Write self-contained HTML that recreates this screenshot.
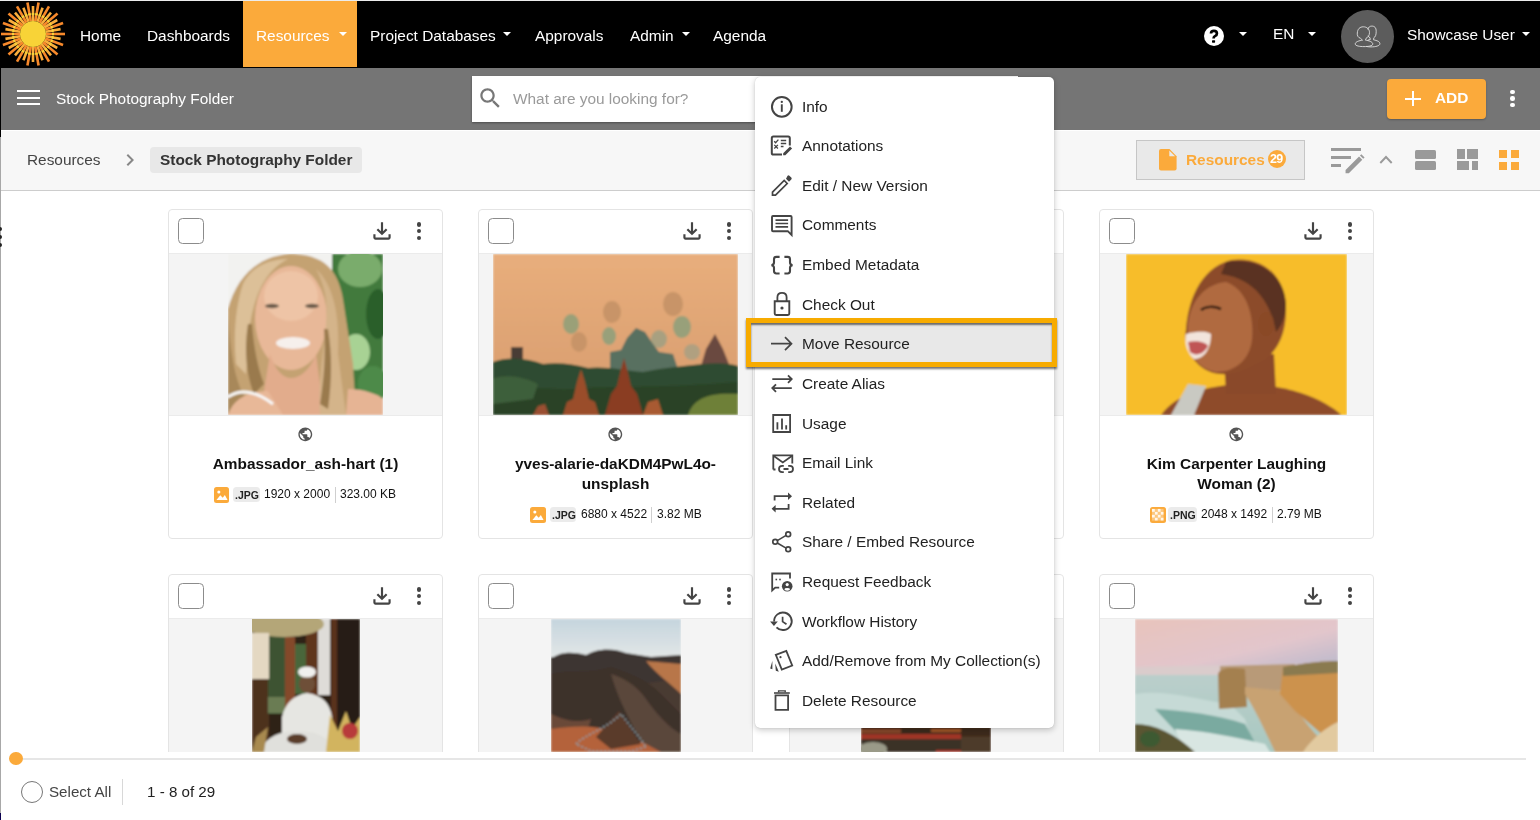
<!DOCTYPE html><html><head><meta charset="utf-8"><style>*{box-sizing:border-box;margin:0;padding:0}
html,body{width:1540px;height:820px;overflow:hidden;background:#fff;font-family:"Liberation Sans",sans-serif;color:#222}
.abs{position:absolute}
.t{position:absolute;white-space:nowrap}
.t{will-change:transform}
</style></head><body>
<div class="abs" style="left:0;top:0;width:1540px;height:1px;background:#ececec"></div>
<div class="abs" style="left:0;top:1px;width:1540px;height:67px;background:#000"></div>
<div class="abs" style="left:243px;top:1px;width:114px;height:66px;background:#fbaa3b"></div>
<svg class="abs" style="left:0px;top:0px;" width="70" height="70" viewBox="0 0 70 70"><line x1="46.00" y1="34.00" x2="65.00" y2="34.00" stroke="#f7892b" stroke-width="2.6"/><line x1="52.00" y1="34.00" x2="54.00" y2="34.00" stroke="#f7d43a" stroke-width="2.6"/><line x1="45.80" y1="36.26" x2="60.57" y2="38.86" stroke="#f9ad3c" stroke-width="2.6"/><line x1="51.71" y1="37.30" x2="53.68" y2="37.65" stroke="#f7d43a" stroke-width="2.6"/><line x1="45.22" y1="38.45" x2="63.07" y2="44.94" stroke="#f7892b" stroke-width="2.6"/><line x1="50.85" y1="40.50" x2="52.73" y2="41.18" stroke="#f7d43a" stroke-width="2.6"/><line x1="44.26" y1="40.50" x2="57.25" y2="48.00" stroke="#f9ad3c" stroke-width="2.6"/><line x1="49.45" y1="43.50" x2="51.19" y2="44.50" stroke="#f7d43a" stroke-width="2.6"/><line x1="42.96" y1="42.36" x2="57.51" y2="54.57" stroke="#f7892b" stroke-width="2.6"/><line x1="47.55" y1="46.21" x2="49.09" y2="47.50" stroke="#f7d43a" stroke-width="2.6"/><line x1="41.36" y1="43.96" x2="51.00" y2="55.45" stroke="#f9ad3c" stroke-width="2.6"/><line x1="45.21" y1="48.55" x2="46.50" y2="50.09" stroke="#f7d43a" stroke-width="2.6"/><line x1="39.50" y1="45.26" x2="49.00" y2="61.71" stroke="#f7892b" stroke-width="2.6"/><line x1="42.50" y1="50.45" x2="43.50" y2="52.19" stroke="#f7d43a" stroke-width="2.6"/><line x1="37.45" y1="46.22" x2="42.58" y2="60.31" stroke="#f9ad3c" stroke-width="2.6"/><line x1="39.50" y1="51.85" x2="40.18" y2="53.73" stroke="#f7d43a" stroke-width="2.6"/><line x1="35.26" y1="46.80" x2="38.56" y2="65.51" stroke="#f7892b" stroke-width="2.6"/><line x1="36.30" y1="52.71" x2="36.65" y2="54.68" stroke="#f7d43a" stroke-width="2.6"/><line x1="33.00" y1="47.00" x2="33.00" y2="62.00" stroke="#f9ad3c" stroke-width="2.6"/><line x1="33.00" y1="53.00" x2="33.00" y2="55.00" stroke="#f7d43a" stroke-width="2.6"/><line x1="30.74" y1="46.80" x2="27.44" y2="65.51" stroke="#f7892b" stroke-width="2.6"/><line x1="29.70" y1="52.71" x2="29.35" y2="54.68" stroke="#f7d43a" stroke-width="2.6"/><line x1="28.55" y1="46.22" x2="23.42" y2="60.31" stroke="#f9ad3c" stroke-width="2.6"/><line x1="26.50" y1="51.85" x2="25.82" y2="53.73" stroke="#f7d43a" stroke-width="2.6"/><line x1="26.50" y1="45.26" x2="17.00" y2="61.71" stroke="#f7892b" stroke-width="2.6"/><line x1="23.50" y1="50.45" x2="22.50" y2="52.19" stroke="#f7d43a" stroke-width="2.6"/><line x1="24.64" y1="43.96" x2="15.00" y2="55.45" stroke="#f9ad3c" stroke-width="2.6"/><line x1="20.79" y1="48.55" x2="19.50" y2="50.09" stroke="#f7d43a" stroke-width="2.6"/><line x1="23.04" y1="42.36" x2="8.49" y2="54.57" stroke="#f7892b" stroke-width="2.6"/><line x1="18.45" y1="46.21" x2="16.91" y2="47.50" stroke="#f7d43a" stroke-width="2.6"/><line x1="21.74" y1="40.50" x2="8.75" y2="48.00" stroke="#f9ad3c" stroke-width="2.6"/><line x1="16.55" y1="43.50" x2="14.81" y2="44.50" stroke="#f7d43a" stroke-width="2.6"/><line x1="20.78" y1="38.45" x2="2.93" y2="44.94" stroke="#f7892b" stroke-width="2.6"/><line x1="15.15" y1="40.50" x2="13.27" y2="41.18" stroke="#f7d43a" stroke-width="2.6"/><line x1="20.20" y1="36.26" x2="5.43" y2="38.86" stroke="#f9ad3c" stroke-width="2.6"/><line x1="14.29" y1="37.30" x2="12.32" y2="37.65" stroke="#f7d43a" stroke-width="2.6"/><line x1="20.00" y1="34.00" x2="1.00" y2="34.00" stroke="#f7892b" stroke-width="2.6"/><line x1="14.00" y1="34.00" x2="12.00" y2="34.00" stroke="#f7d43a" stroke-width="2.6"/><line x1="20.20" y1="31.74" x2="5.43" y2="29.14" stroke="#f9ad3c" stroke-width="2.6"/><line x1="14.29" y1="30.70" x2="12.32" y2="30.35" stroke="#f7d43a" stroke-width="2.6"/><line x1="20.78" y1="29.55" x2="2.93" y2="23.06" stroke="#f7892b" stroke-width="2.6"/><line x1="15.15" y1="27.50" x2="13.27" y2="26.82" stroke="#f7d43a" stroke-width="2.6"/><line x1="21.74" y1="27.50" x2="8.75" y2="20.00" stroke="#f9ad3c" stroke-width="2.6"/><line x1="16.55" y1="24.50" x2="14.81" y2="23.50" stroke="#f7d43a" stroke-width="2.6"/><line x1="23.04" y1="25.64" x2="8.49" y2="13.43" stroke="#f7892b" stroke-width="2.6"/><line x1="18.45" y1="21.79" x2="16.91" y2="20.50" stroke="#f7d43a" stroke-width="2.6"/><line x1="24.64" y1="24.04" x2="15.00" y2="12.55" stroke="#f9ad3c" stroke-width="2.6"/><line x1="20.79" y1="19.45" x2="19.50" y2="17.91" stroke="#f7d43a" stroke-width="2.6"/><line x1="26.50" y1="22.74" x2="17.00" y2="6.29" stroke="#f7892b" stroke-width="2.6"/><line x1="23.50" y1="17.55" x2="22.50" y2="15.81" stroke="#f7d43a" stroke-width="2.6"/><line x1="28.55" y1="21.78" x2="23.42" y2="7.69" stroke="#f9ad3c" stroke-width="2.6"/><line x1="26.50" y1="16.15" x2="25.82" y2="14.27" stroke="#f7d43a" stroke-width="2.6"/><line x1="30.74" y1="21.20" x2="27.44" y2="2.49" stroke="#f7892b" stroke-width="2.6"/><line x1="29.70" y1="15.29" x2="29.35" y2="13.32" stroke="#f7d43a" stroke-width="2.6"/><line x1="33.00" y1="21.00" x2="33.00" y2="6.00" stroke="#f9ad3c" stroke-width="2.6"/><line x1="33.00" y1="15.00" x2="33.00" y2="13.00" stroke="#f7d43a" stroke-width="2.6"/><line x1="35.26" y1="21.20" x2="38.56" y2="2.49" stroke="#f7892b" stroke-width="2.6"/><line x1="36.30" y1="15.29" x2="36.65" y2="13.32" stroke="#f7d43a" stroke-width="2.6"/><line x1="37.45" y1="21.78" x2="42.58" y2="7.69" stroke="#f9ad3c" stroke-width="2.6"/><line x1="39.50" y1="16.15" x2="40.18" y2="14.27" stroke="#f7d43a" stroke-width="2.6"/><line x1="39.50" y1="22.74" x2="49.00" y2="6.29" stroke="#f7892b" stroke-width="2.6"/><line x1="42.50" y1="17.55" x2="43.50" y2="15.81" stroke="#f7d43a" stroke-width="2.6"/><line x1="41.36" y1="24.04" x2="51.00" y2="12.55" stroke="#f9ad3c" stroke-width="2.6"/><line x1="45.21" y1="19.45" x2="46.50" y2="17.91" stroke="#f7d43a" stroke-width="2.6"/><line x1="42.96" y1="25.64" x2="57.51" y2="13.43" stroke="#f7892b" stroke-width="2.6"/><line x1="47.55" y1="21.79" x2="49.09" y2="20.50" stroke="#f7d43a" stroke-width="2.6"/><line x1="44.26" y1="27.50" x2="57.25" y2="20.00" stroke="#f9ad3c" stroke-width="2.6"/><line x1="49.45" y1="24.50" x2="51.19" y2="23.50" stroke="#f7d43a" stroke-width="2.6"/><line x1="45.22" y1="29.55" x2="63.07" y2="23.06" stroke="#f7892b" stroke-width="2.6"/><line x1="50.85" y1="27.50" x2="52.73" y2="26.82" stroke="#f7d43a" stroke-width="2.6"/><line x1="45.80" y1="31.74" x2="60.57" y2="29.14" stroke="#f9ad3c" stroke-width="2.6"/><line x1="51.71" y1="30.70" x2="53.68" y2="30.35" stroke="#f7d43a" stroke-width="2.6"/><circle cx="33" cy="34" r="13" fill="#f8d337"/></svg>
<div class="t" style="left:79.50px;top:27.86px;font-size:15.4px;line-height:15.4px;color:#fff;font-weight:normal;">Home</div>
<div class="t" style="left:146.50px;top:27.86px;font-size:15.4px;line-height:15.4px;color:#fff;font-weight:normal;">Dashboards</div>
<div class="t" style="left:256.00px;top:27.86px;font-size:15.4px;line-height:15.4px;color:#fff;font-weight:normal;">Resources</div>
<div class="abs" style="left:338.5px;top:32px;width:0;height:0;border-left:4px solid transparent;border-right:4px solid transparent;border-top:4.5px solid #fff"></div>
<div class="t" style="left:369.50px;top:27.86px;font-size:15.4px;line-height:15.4px;color:#fff;font-weight:normal;">Project Databases</div>
<div class="abs" style="left:502.5px;top:32px;width:0;height:0;border-left:4px solid transparent;border-right:4px solid transparent;border-top:4.5px solid #fff"></div>
<div class="t" style="left:534.50px;top:27.86px;font-size:15.4px;line-height:15.4px;color:#fff;font-weight:normal;">Approvals</div>
<div class="t" style="left:629.50px;top:27.86px;font-size:15.4px;line-height:15.4px;color:#fff;font-weight:normal;">Admin</div>
<div class="abs" style="left:681.5px;top:32px;width:0;height:0;border-left:4px solid transparent;border-right:4px solid transparent;border-top:4.5px solid #fff"></div>
<div class="t" style="left:712.50px;top:27.86px;font-size:15.4px;line-height:15.4px;color:#fff;font-weight:normal;">Agenda</div>
<div class="abs" style="left:1203.6px;top:26.1px;width:20.2px;height:20.2px;border-radius:50%;background:#fff"></div>
<svg class="abs" style="left:1200px;top:22px;" width="28" height="28" viewBox="0 0 28 28"><path d="M11 11.6Q11 8.9 13.9 8.9Q16.9 8.9 16.9 11.5Q16.9 13 15.3 13.9Q13.6 14.8 13.6 16.2V16.6" fill="none" stroke="#000" stroke-width="2.7" stroke-linecap="butt"/><rect x="12" y="18.2" width="3.1" height="2.5" rx="0.6" fill="#000"/></svg>
<div class="abs" style="left:1239px;top:31.6px;width:0;height:0;border-left:4px solid transparent;border-right:4px solid transparent;border-top:4.5px solid #fff"></div>
<div class="t" style="left:1273.00px;top:25.76px;font-size:15.4px;line-height:15.4px;color:#fff;font-weight:normal;">EN</div>
<div class="abs" style="left:1308px;top:31.6px;width:0;height:0;border-left:4px solid transparent;border-right:4px solid transparent;border-top:4.5px solid #fff"></div>
<div class="abs" style="left:1340.7px;top:9.5px;width:53.5px;height:53.5px;border-radius:50%;background:#5c5c5c"></div>
<svg class="abs" style="left:1340px;top:9px;" width="55" height="55" viewBox="0 0 55 55"><path d="M20.5 29.3C18 28.5 17 26.5 17.3 24C17.6 20 19.8 17.8 23.3 17.8C26.8 17.8 29.5 20 29.5 23.6C29.5 26.3 28 28.5 26 29.3L25.5 31.2C28.5 31.5 32.8 32.8 32.8 35C32.8 37 28 37.6 24 37.6C20 37.6 15.2 37 15.2 35C15.2 32.8 19.5 31.5 22.5 31.2z" fill="none" stroke="#e6e6e6" stroke-width="0.85"/><path d="M27.8 20.5C28.3 18.2 29.8 17.1 31.8 17.1C34.5 17.1 36.2 18.5 36.2 22.5C36.2 26 35.3 28 33.8 28.8L33.6 30.9C36.8 31.4 39.9 32.6 39.9 34.7C39.9 36.9 35.5 37.9 31 37.9C29 37.9 27.5 37.7 26.5 37.4M27.6 31.3C28.5 30.8 29.5 30.5 30.3 30.6L30 28.7C28.8 28.2 28.2 27.5 27.8 26.8" fill="none" stroke="#e6e6e6" stroke-width="0.85"/></svg>
<div class="t" style="left:1406.50px;top:27.46px;font-size:15.4px;line-height:15.4px;color:#fff;font-weight:normal;">Showcase User</div>
<div class="abs" style="left:1522px;top:32px;width:0;height:0;border-left:4px solid transparent;border-right:4px solid transparent;border-top:4.5px solid #fff"></div>
<div class="abs" style="left:1px;top:68px;width:1539px;height:62px;background:#757575"></div>
<div class="abs" style="left:17px;top:90.1px;width:23.2px;height:2.4px;background:#fff"></div>
<div class="abs" style="left:17px;top:96.7px;width:23.2px;height:2.4px;background:#fff"></div>
<div class="abs" style="left:17px;top:102.9px;width:23.2px;height:2.4px;background:#fff"></div>
<div class="t" style="left:55.80px;top:91.16px;font-size:15.4px;line-height:15.4px;color:#fff;font-weight:normal;">Stock Photography Folder</div>
<div class="abs" style="left:472px;top:76px;width:546px;height:46px;background:#fff;box-shadow:0 1px 2px rgba(0,0,0,.35)"></div>
<svg class="abs" style="left:477px;top:85px;" width="26.6" height="26.6" viewBox="0 0 24 24"><path fill="#777" d="M15.5 14h-.79l-.28-.27C15.41 12.59 16 11.11 16 9.5 16 5.91 13.09 3 9.5 3S3 5.91 3 9.5 5.91 16 9.5 16c1.61 0 3.09-.59 4.23-1.57l.27.28v.79l5 4.99L20.49 19l-4.99-5zm-6 0C7.010 14 5 11.99 5 9.5S7.01 5 9.5 5 14 7.01 14 9.5 11.99 14 9.5 14z"/></svg>
<div class="t" style="left:512.50px;top:90.76px;font-size:15.4px;line-height:15.4px;color:#9a9a9a;font-weight:normal;">What are you looking for?</div>
<div class="abs" style="left:1387px;top:79px;width:99px;height:40px;background:#fbaa3b;border-radius:4px;box-shadow:0 1px 2px rgba(0,0,0,.25)"></div>
<div class="abs" style="left:1405px;top:97.6px;width:15.5px;height:2.2px;background:#fff"></div>
<div class="abs" style="left:1411.65px;top:90.8px;width:2.2px;height:15.5px;background:#fff"></div>
<div class="t" style="left:1434.50px;top:90.16px;font-size:15.4px;line-height:15.4px;color:#fff;font-weight:bold;">ADD</div>
<div class="abs" style="left:1510.2px;top:89.6px;width:4.4px;height:4.4px;border-radius:50%;background:#fff"></div>
<div class="abs" style="left:1510.2px;top:96.3px;width:4.4px;height:4.4px;border-radius:50%;background:#fff"></div>
<div class="abs" style="left:1510.2px;top:103.1px;width:4.4px;height:4.4px;border-radius:50%;background:#fff"></div>
<div class="abs" style="left:1px;top:130px;width:1539px;height:61px;background:#f7f7f7;border-top:1px solid #fff;border-bottom:1px solid #cdcdcd"></div>
<div class="abs" style="left:0;top:1px;width:1px;height:136px;background:#000"></div>
<div class="abs" style="left:0;top:137px;width:1px;height:683px;background:#a8a8a8"></div>
<div class="t" style="left:27.00px;top:151.56px;font-size:15.4px;line-height:15.4px;color:#444;font-weight:normal;">Resources</div>
<svg class="abs" style="left:118px;top:148px;" width="24" height="24" viewBox="0 0 24 24"><path fill="#888" d="M10 6L8.59 7.41 13.17 12l-4.58 4.59L10 18l6-6z"/></svg>
<div class="abs" style="left:150px;top:147px;width:212px;height:26px;background:#e8e8e8;border-radius:4px"></div>
<div class="t" style="left:159.80px;top:151.56px;font-size:15.4px;line-height:15.4px;color:#333;font-weight:bold;">Stock Photography Folder</div>
<div class="abs" style="left:1136px;top:140px;width:169px;height:40px;background:#e9e9e9;border:1px solid #c6c6c6"></div>
<svg class="abs" style="left:1159px;top:149px;" width="17.6" height="21.6" viewBox="0 0 17.6 21.6"><path fill="#fbaa3b" d="M2 0h8.5L17.6 7.2V19.6a2 2 0 0 1-2 2H2a2 2 0 0 1-2-2V2a2 2 0 0 1 2-2z"/><path fill="#e9e9e9" d="M10.3 1.5v5.8h5.8z"/></svg>
<div class="t" style="left:1185.50px;top:152.46px;font-size:15.4px;line-height:15.4px;color:#fbaa3b;font-weight:bold;">Resources</div>
<div class="abs" style="left:1268px;top:150px;width:18px;height:18px;border-radius:50%;background:#fbaa3b"></div>
<div class="t" style="left:1269.60px;top:153.02px;font-size:12.5px;line-height:12.5px;color:#fff;font-weight:bold;letter-spacing:-0.7px">29</div>
<div class="abs" style="left:1331px;top:147.6px;width:29.7px;height:3px;background:#9a9a9a"></div>
<div class="abs" style="left:1331px;top:156px;width:20px;height:3px;background:#9a9a9a"></div>
<div class="abs" style="left:1331px;top:164px;width:10px;height:3px;background:#9a9a9a"></div>
<svg class="abs" style="left:1340px;top:150px;" width="26" height="26" viewBox="0 0 28 28"><path fill="#9a9a9a" d="M6 25 L6 21.5 L20.5 7 L24 10.5 L9.5 25z M21.5 6 L23 4.5 L26.5 8 L25 9.5z"/></svg>
<svg class="abs" style="left:1378px;top:152px;" width="16" height="13" viewBox="0 0 16 13"><path fill="none" stroke="#9a9a9a" stroke-width="1.9" d="M2.3 11 L8 5 L13.7 11"/></svg>
<div class="abs" style="left:1414.6px;top:150px;width:21px;height:8.6px;background:#9a9a9a;border-radius:1.5px"></div>
<div class="abs" style="left:1414.6px;top:161px;width:21px;height:9px;background:#9a9a9a;border-radius:1.5px"></div>
<div class="abs" style="left:1457px;top:149px;width:8px;height:9.5px;background:#9a9a9a"></div>
<div class="abs" style="left:1467px;top:149px;width:11px;height:9.5px;background:#9a9a9a"></div>
<div class="abs" style="left:1457px;top:161px;width:12.4px;height:9px;background:#9a9a9a"></div>
<div class="abs" style="left:1472px;top:161px;width:6px;height:9px;background:#9a9a9a"></div>
<div class="abs" style="left:1499px;top:150px;width:8px;height:8.2px;background:#fbaa3b"></div>
<div class="abs" style="left:1499px;top:161.5px;width:8px;height:8.2px;background:#fbaa3b"></div>
<div class="abs" style="left:1511px;top:150px;width:8px;height:8.2px;background:#fbaa3b"></div>
<div class="abs" style="left:1511px;top:161.5px;width:8px;height:8.2px;background:#fbaa3b"></div>
<div class="abs" style="left:168px;top:209px;width:275px;height:330px;overflow:hidden">
<div class="abs" style="left:0;top:0;width:275px;height:330px;border:1px solid #e4e4e4;border-radius:4px;background:#fff"></div>
<div class="abs" style="left:1px;top:44px;width:273px;height:1px;background:#ebebeb"></div>
<div class="abs" style="left:1px;top:45px;width:273px;height:161px;background:#f4f4f4"></div>
<div class="abs" style="left:1px;top:206px;width:273px;height:1px;background:#ebebeb"></div>
</div>
<div class="abs" style="left:178px;top:218px;width:26px;height:26px;border:1.5px solid #8c8c8c;border-radius:4.5px;background:#fff"></div>
<svg class="abs" style="left:369px;top:217.5px;" width="26" height="26" viewBox="0 0 24 24"><path fill="#444" d="M18 15v3H6v-3H4v3c0 1.1.9 2 2 2h12c1.1 0 2-.9 2-2v-3h-2zm-1-4l-1.41-1.41L13 12.17V4h-2v8.17L8.41 9.59 7 11l5 5 5-5z"/></svg>
<div class="abs" style="left:416.8px;top:222.3px;width:4.4px;height:4.4px;border-radius:50%;background:#444"></div>
<div class="abs" style="left:416.8px;top:229.0px;width:4.4px;height:4.4px;border-radius:50%;background:#444"></div>
<div class="abs" style="left:416.8px;top:235.60000000000002px;width:4.4px;height:4.4px;border-radius:50%;background:#444"></div>
<svg class="abs" style="left:228px;top:254px" width="155" height="161" viewBox="0 0 155 161"><defs><filter id="b228254" x="-10%" y="-10%" width="120%" height="120%"><feGaussianBlur stdDeviation="1.2"/></filter><clipPath id="cb228254"><rect width="155" height="161"/></clipPath></defs><g clip-path="url(#cb228254)"><g filter="url(#b228254)"><rect width="155" height="161" fill="#f2f2f0"/><rect x="104" y="0" width="51" height="161" fill="#427a3e"/><ellipse cx="132" cy="15" rx="22" ry="18" fill="#7aac6c"/><ellipse cx="150" cy="60" rx="12" ry="25" fill="#2a5e2a"/><ellipse cx="128" cy="98" rx="14" ry="18" fill="#a8d294"/><ellipse cx="145" cy="130" rx="15" ry="18" fill="#4e8a48"/><path d="M0 161 L0 55 C8 25 28 2 62 0 C95 0 110 15 115 45 L125 110 L128 161z" fill="#c4a272"/><path d="M0 60 C2 90 5 120 15 140 L30 161 L0 161z" fill="#a8885a"/><ellipse cx="63" cy="64" rx="36" ry="52" fill="#e8b898"/><ellipse cx="63" cy="42" rx="27" ry="25" fill="#eec4a6"/><path d="M42 100 C48 118 56 124 63 124 C72 124 82 116 88 100 L96 161 L32 161z" fill="#e2ac8c"/><path d="M0 161 C5 145 20 137 40 137 L55 161z" fill="#e8b898"/><path d="M120 135 C135 135 150 140 155 145 L155 161 L118 161z" fill="#e6b494"/><path d="M15 30 C25 10 45 5 60 5 C40 15 28 35 22 70 L18 120 L8 110 C5 80 8 50 15 30z" fill="#dcc098"/><path d="M24 70 C26 95 30 115 36 130 L26 140 C18 120 16 95 20 70z" fill="#9a7a4e"/><path d="M88 15 C105 30 112 60 110 100 L118 161 L92 161 C90 130 95 100 98 70 C100 45 96 30 88 15z" fill="#d4b48a"/><path d="M96 75 C98 100 96 125 92 150 L100 155 C104 125 104 100 100 75z" fill="#9a7a4e"/><ellipse cx="65" cy="89" rx="17" ry="6" fill="#f6f0ec"/><ellipse cx="44" cy="52" rx="7" ry="2.2" fill="#6a5a4a"/><ellipse cx="84" cy="52" rx="7" ry="2.2" fill="#6a5a4a"/><path d="M0 143 C10 136 25 135 45 150" stroke="#f8f8f8" stroke-width="3" fill="none"/></g></g></svg>
<svg class="abs" style="left:297.09999999999997px;top:426.3px;" width="16.6" height="16.6" viewBox="0 0 24 24"><path fill="#555" d="M12 2C6.48 2 2 6.48 2 12s4.48 10 10 10 10-4.48 10-10S17.52 2 12 2zm-1 17.93c-3.95-.49-7-3.85-7-7.930 0-.62.08-1.21.21-1.79L9 15v1c0 1.1.9 2 2 2v1.93zm6.9-2.54c-.26-.81-1-1.39-1.9-1.39h-1v-3c0-.55-.45-1-1-1H8v-2h2c.55 0 1-.45 1-1V7h2c1.1 0 2-.9 2-2v-.41c2.93 1.19 5 4.06 5 7.41 0 2.08-.8 3.97-2.1 5.39z"/></svg>
<div class="t" style="left:168px;width:275px;text-align:center;top:455.96px;font-size:15.4px;line-height:15.4px;font-weight:bold;color:#111">Ambassador_ash-hart (1)</div>
<div class="abs" style="left:213.8px;top:487px;width:15.5px;height:15.5px;border-radius:2.5px;background:#fbaa3b"></div>
<svg class="abs" style="left:213.8px;top:487px;" width="15.5" height="15.5" viewBox="0 0 16 16"><circle cx="5" cy="5.2" r="1.6" fill="#fff"/><path d="M2.5 13.5 L6.5 8.5 L9 11 L11.2 8.3 L14 13.5z" fill="#fff"/></svg>
<div class="abs" style="left:233.3px;top:487px;width:26.5px;height:15px;border-radius:3.5px;background:#ebebeb"></div>
<div class="t" style="left:235.30px;top:489.71px;font-size:10.5px;line-height:10.5px;color:#222;font-weight:bold;">.JPG</div>
<div class="t" style="left:264.40px;top:487.84px;font-size:12px;line-height:12px;color:#111;font-weight:normal;">1920 x 2000</div>
<div class="abs" style="left:334.8px;top:487px;width:1px;height:15.5px;background:#cfcfcf"></div>
<div class="t" style="left:340.40px;top:487.84px;font-size:12px;line-height:12px;color:#111;font-weight:normal;">323.00 KB</div>
<div class="abs" style="left:478px;top:209px;width:275px;height:330px;overflow:hidden">
<div class="abs" style="left:0;top:0;width:275px;height:330px;border:1px solid #e4e4e4;border-radius:4px;background:#fff"></div>
<div class="abs" style="left:1px;top:44px;width:273px;height:1px;background:#ebebeb"></div>
<div class="abs" style="left:1px;top:45px;width:273px;height:161px;background:#f4f4f4"></div>
<div class="abs" style="left:1px;top:206px;width:273px;height:1px;background:#ebebeb"></div>
</div>
<div class="abs" style="left:488px;top:218px;width:26px;height:26px;border:1.5px solid #8c8c8c;border-radius:4.5px;background:#fff"></div>
<svg class="abs" style="left:679px;top:217.5px;" width="26" height="26" viewBox="0 0 24 24"><path fill="#444" d="M18 15v3H6v-3H4v3c0 1.1.9 2 2 2h12c1.1 0 2-.9 2-2v-3h-2zm-1-4l-1.41-1.41L13 12.17V4h-2v8.17L8.41 9.59 7 11l5 5 5-5z"/></svg>
<div class="abs" style="left:726.8px;top:222.3px;width:4.4px;height:4.4px;border-radius:50%;background:#444"></div>
<div class="abs" style="left:726.8px;top:229.0px;width:4.4px;height:4.4px;border-radius:50%;background:#444"></div>
<div class="abs" style="left:726.8px;top:235.60000000000002px;width:4.4px;height:4.4px;border-radius:50%;background:#444"></div>
<svg class="abs" style="left:493px;top:254px" width="245" height="161" viewBox="0 0 245 161"><defs><filter id="b493254" x="-10%" y="-10%" width="120%" height="120%"><feGaussianBlur stdDeviation="1.2"/></filter><clipPath id="cb493254"><rect width="245" height="161"/></clipPath></defs><g clip-path="url(#cb493254)"><g filter="url(#b493254)"><defs><linearGradient id="sky2" x1="0" y1="0" x2="0" y2="1"><stop offset="0" stop-color="#e8ae7c"/><stop offset="0.7" stop-color="#dca172"/><stop offset="1" stop-color="#c89068"/></linearGradient></defs><rect width="245" height="161" fill="url(#sky2)"/><ellipse cx="78" cy="70" rx="8" ry="10" fill="#9aa078"/><ellipse cx="86" cy="88" rx="8" ry="10" fill="#c89468"/><ellipse cx="119" cy="58" rx="9" ry="11" fill="#c89468"/><ellipse cx="116" cy="82" rx="7" ry="9" fill="#98a07a"/><ellipse cx="180" cy="50" rx="10" ry="12" fill="#c89468"/><ellipse cx="189" cy="73" rx="9" ry="11" fill="#98a07a"/><ellipse cx="166" cy="85" rx="8" ry="9" fill="#a8a080"/><ellipse cx="199" cy="98" rx="8" ry="8" fill="#b0a080"/><path d="M117 118 L117 98 L128 96 L134 84 L143 74 L152 78 L160 90 L166 98 L180 100 L186 118z" fill="#587060"/><path d="M208 112 L213 95 L222 80 L230 95 L236 110 L236 122 L206 122z" fill="#6a4a40"/><rect x="18" y="93" width="12" height="16" fill="#4a3c34"/><path d="M0 108 C15 102 35 104 50 110 C65 108 80 110 95 114 C110 112 130 116 150 118 C170 114 190 112 210 110 C225 108 240 110 245 112 L245 161 L0 161z" fill="#2f4c30"/><path d="M0 135 C30 130 60 138 90 134 C130 132 170 134 245 128 L245 161 L0 161z" fill="#2a4228"/><path d="M195 161 C200 145 215 138 245 140 L245 161z" fill="#6e8038"/><path d="M0 125 C10 120 30 122 45 130 L40 145 L0 150z" fill="#3e5e3a"/><path d="M70 161 L74 148 L80 145 L84 128 L88 115 L92 128 L96 145 L102 148 L106 161z" fill="#9a4e2a"/><path d="M112 161 L118 140 L124 132 L128 115 L131 104 L134 115 L138 132 L144 140 L150 161z" fill="#8a3e22"/><path d="M40 161 L45 152 L52 150 L56 161z" fill="#9a5030"/><path d="M150 161 L155 148 L165 145 L170 161z" fill="#a85a30"/></g></g></svg>
<svg class="abs" style="left:607.1px;top:426.3px;" width="16.6" height="16.6" viewBox="0 0 24 24"><path fill="#555" d="M12 2C6.48 2 2 6.48 2 12s4.48 10 10 10 10-4.48 10-10S17.52 2 12 2zm-1 17.93c-3.95-.49-7-3.85-7-7.930 0-.62.08-1.21.21-1.79L9 15v1c0 1.1.9 2 2 2v1.93zm6.9-2.54c-.26-.81-1-1.39-1.9-1.39h-1v-3c0-.55-.45-1-1-1H8v-2h2c.55 0 1-.45 1-1V7h2c1.1 0 2-.9 2-2v-.41c2.93 1.19 5 4.06 5 7.41 0 2.08-.8 3.97-2.1 5.39z"/></svg>
<div class="t" style="left:478px;width:275px;text-align:center;top:455.96px;font-size:15.4px;line-height:15.4px;font-weight:bold;color:#111">yves-alarie-daKDM4PwL4o-</div>
<div class="t" style="left:478px;width:275px;text-align:center;top:475.96px;font-size:15.4px;line-height:15.4px;font-weight:bold;color:#111">unsplash</div>
<div class="abs" style="left:530.1px;top:507px;width:15.5px;height:15.5px;border-radius:2.5px;background:#fbaa3b"></div>
<svg class="abs" style="left:530.1px;top:507px;" width="15.5" height="15.5" viewBox="0 0 16 16"><circle cx="5" cy="5.2" r="1.6" fill="#fff"/><path d="M2.5 13.5 L6.5 8.5 L9 11 L11.2 8.3 L14 13.5z" fill="#fff"/></svg>
<div class="abs" style="left:549.6px;top:507px;width:26.5px;height:15px;border-radius:3.5px;background:#ebebeb"></div>
<div class="t" style="left:551.60px;top:509.71px;font-size:10.5px;line-height:10.5px;color:#222;font-weight:bold;">.JPG</div>
<div class="t" style="left:580.70px;top:507.84px;font-size:12px;line-height:12px;color:#111;font-weight:normal;">6880 x 4522</div>
<div class="abs" style="left:651px;top:507px;width:1px;height:15.5px;background:#cfcfcf"></div>
<div class="t" style="left:656.60px;top:507.84px;font-size:12px;line-height:12px;color:#111;font-weight:normal;">3.82 MB</div>
<div class="abs" style="left:789px;top:209px;width:275px;height:330px;overflow:hidden">
<div class="abs" style="left:0;top:0;width:275px;height:330px;border:1px solid #e4e4e4;border-radius:4px;background:#fff"></div>
<div class="abs" style="left:1px;top:44px;width:273px;height:1px;background:#ebebeb"></div>
<div class="abs" style="left:1px;top:45px;width:273px;height:161px;background:#f4f4f4"></div>
<div class="abs" style="left:1px;top:206px;width:273px;height:1px;background:#ebebeb"></div>
</div>
<div class="abs" style="left:799px;top:218px;width:26px;height:26px;border:1.5px solid #8c8c8c;border-radius:4.5px;background:#fff"></div>
<svg class="abs" style="left:990px;top:217.5px;" width="26" height="26" viewBox="0 0 24 24"><path fill="#444" d="M18 15v3H6v-3H4v3c0 1.1.9 2 2 2h12c1.1 0 2-.9 2-2v-3h-2zm-1-4l-1.41-1.41L13 12.17V4h-2v8.17L8.41 9.59 7 11l5 5 5-5z"/></svg>
<div class="abs" style="left:1037.8px;top:222.3px;width:4.4px;height:4.4px;border-radius:50%;background:#444"></div>
<div class="abs" style="left:1037.8px;top:229.0px;width:4.4px;height:4.4px;border-radius:50%;background:#444"></div>
<div class="abs" style="left:1037.8px;top:235.60000000000002px;width:4.4px;height:4.4px;border-radius:50%;background:#444"></div>
<div class="abs" style="left:1099px;top:209px;width:275px;height:330px;overflow:hidden">
<div class="abs" style="left:0;top:0;width:275px;height:330px;border:1px solid #e4e4e4;border-radius:4px;background:#fff"></div>
<div class="abs" style="left:1px;top:44px;width:273px;height:1px;background:#ebebeb"></div>
<div class="abs" style="left:1px;top:45px;width:273px;height:161px;background:#f4f4f4"></div>
<div class="abs" style="left:1px;top:206px;width:273px;height:1px;background:#ebebeb"></div>
</div>
<div class="abs" style="left:1109px;top:218px;width:26px;height:26px;border:1.5px solid #8c8c8c;border-radius:4.5px;background:#fff"></div>
<svg class="abs" style="left:1300px;top:217.5px;" width="26" height="26" viewBox="0 0 24 24"><path fill="#444" d="M18 15v3H6v-3H4v3c0 1.1.9 2 2 2h12c1.1 0 2-.9 2-2v-3h-2zm-1-4l-1.41-1.41L13 12.17V4h-2v8.17L8.41 9.59 7 11l5 5 5-5z"/></svg>
<div class="abs" style="left:1347.8px;top:222.3px;width:4.4px;height:4.4px;border-radius:50%;background:#444"></div>
<div class="abs" style="left:1347.8px;top:229.0px;width:4.4px;height:4.4px;border-radius:50%;background:#444"></div>
<div class="abs" style="left:1347.8px;top:235.60000000000002px;width:4.4px;height:4.4px;border-radius:50%;background:#444"></div>
<svg class="abs" style="left:1126px;top:254px" width="221" height="161" viewBox="0 0 221 161"><defs><filter id="b1126254" x="-10%" y="-10%" width="120%" height="120%"><feGaussianBlur stdDeviation="1.2"/></filter><clipPath id="cb1126254"><rect width="221" height="161"/></clipPath></defs><g clip-path="url(#cb1126254)"><g filter="url(#b1126254)"><rect width="221" height="161" fill="#f7bd2c"/><path d="M35 161 C50 140 80 132 115 130 C150 130 180 138 200 150 C210 156 215 160 215 161z" fill="#8e4c2a"/><path d="M100 140 L98 105 L148 100 L150 140z" fill="#8a4a2a"/><path d="M105 6 C135 2 160 20 160 55 C160 80 152 95 140 105 L120 115 C100 125 80 120 70 108 C62 98 58 88 60 75 C62 50 72 15 105 6z" fill="#8c4c2a"/><path d="M100 8 C130 3 158 18 160 50 C160 62 156 72 150 78 C145 50 130 25 95 20z" fill="#5a3220"/><path d="M62 70 C65 45 80 30 100 28 C120 35 128 60 126 85 C124 105 110 118 90 118 C72 115 60 100 62 70z" fill="#b06a40"/><ellipse cx="140" cy="70" rx="8" ry="12" fill="#8a4a28"/><path d="M60 80 C65 78 80 76 85 80 C85 95 78 105 68 105 C62 100 58 90 60 80z" fill="#f2e4dc"/><path d="M62 88 C70 86 80 88 82 92 C78 100 70 103 64 98z" fill="#c05555"/><path d="M75 56 C80 52 88 52 95 55" stroke="#2a1810" stroke-width="2.5" fill="none"/><path d="M45 161 L62 130 L80 132 L68 161z" fill="#c9c9c2"/></g></g></svg>
<svg class="abs" style="left:1228.1000000000001px;top:426.3px;" width="16.6" height="16.6" viewBox="0 0 24 24"><path fill="#555" d="M12 2C6.48 2 2 6.48 2 12s4.48 10 10 10 10-4.48 10-10S17.52 2 12 2zm-1 17.93c-3.95-.49-7-3.85-7-7.930 0-.62.08-1.21.21-1.79L9 15v1c0 1.1.9 2 2 2v1.93zm6.9-2.54c-.26-.81-1-1.39-1.9-1.39h-1v-3c0-.55-.45-1-1-1H8v-2h2c.55 0 1-.45 1-1V7h2c1.1 0 2-.9 2-2v-.41c2.93 1.19 5 4.06 5 7.41 0 2.08-.8 3.97-2.1 5.39z"/></svg>
<div class="t" style="left:1099px;width:275px;text-align:center;top:455.96px;font-size:15.4px;line-height:15.4px;font-weight:bold;color:#111">Kim Carpenter Laughing</div>
<div class="t" style="left:1099px;width:275px;text-align:center;top:475.96px;font-size:15.4px;line-height:15.4px;font-weight:bold;color:#111">Woman (2)</div>
<div class="abs" style="left:1150px;top:507px;width:15.5px;height:15.5px;border-radius:2.5px;background:#fbaa3b"></div>
<svg class="abs" style="left:1150px;top:507px;" width="15.5" height="15.5" viewBox="0 0 16 16"><rect x="2" y="2" width="3" height="3" fill="#fff" opacity="0.9"/><rect x="2" y="5" width="3" height="3" fill="#fff" opacity="0.35"/><rect x="2" y="8" width="3" height="3" fill="#fff" opacity="0.9"/><rect x="2" y="11" width="3" height="3" fill="#fff" opacity="0.35"/><rect x="5" y="2" width="3" height="3" fill="#fff" opacity="0.35"/><rect x="5" y="5" width="3" height="3" fill="#fff" opacity="0.9"/><rect x="5" y="8" width="3" height="3" fill="#fff" opacity="0.35"/><rect x="5" y="11" width="3" height="3" fill="#fff" opacity="0.9"/><rect x="8" y="2" width="3" height="3" fill="#fff" opacity="0.9"/><rect x="8" y="5" width="3" height="3" fill="#fff" opacity="0.35"/><rect x="8" y="8" width="3" height="3" fill="#fff" opacity="0.9"/><rect x="8" y="11" width="3" height="3" fill="#fff" opacity="0.35"/><rect x="11" y="2" width="3" height="3" fill="#fff" opacity="0.35"/><rect x="11" y="5" width="3" height="3" fill="#fff" opacity="0.9"/><rect x="11" y="8" width="3" height="3" fill="#fff" opacity="0.35"/><rect x="11" y="11" width="3" height="3" fill="#fff" opacity="0.9"/></svg>
<div class="abs" style="left:1168.3px;top:507px;width:28.4px;height:15px;border-radius:3.5px;background:#ebebeb"></div>
<div class="t" style="left:1170.30px;top:509.71px;font-size:10.5px;line-height:10.5px;color:#222;font-weight:bold;">.PNG</div>
<div class="t" style="left:1201.30px;top:507.84px;font-size:12px;line-height:12px;color:#111;font-weight:normal;">2048 x 1492</div>
<div class="abs" style="left:168px;top:574px;width:275px;height:178px;overflow:hidden">
<div class="abs" style="left:0;top:0;width:275px;height:330px;border:1px solid #e4e4e4;border-radius:4px;background:#fff"></div>
<div class="abs" style="left:1px;top:44px;width:273px;height:1px;background:#ebebeb"></div>
<div class="abs" style="left:1px;top:45px;width:273px;height:161px;background:#f4f4f4"></div>
<div class="abs" style="left:1px;top:206px;width:273px;height:1px;background:#ebebeb"></div>
</div>
<div class="abs" style="left:178px;top:583px;width:26px;height:26px;border:1.5px solid #8c8c8c;border-radius:4.5px;background:#fff"></div>
<svg class="abs" style="left:369px;top:582.5px;" width="26" height="26" viewBox="0 0 24 24"><path fill="#444" d="M18 15v3H6v-3H4v3c0 1.1.9 2 2 2h12c1.1 0 2-.9 2-2v-3h-2zm-1-4l-1.41-1.41L13 12.17V4h-2v8.17L8.41 9.59 7 11l5 5 5-5z"/></svg>
<div class="abs" style="left:416.8px;top:587.3px;width:4.4px;height:4.4px;border-radius:50%;background:#444"></div>
<div class="abs" style="left:416.8px;top:594.0px;width:4.4px;height:4.4px;border-radius:50%;background:#444"></div>
<div class="abs" style="left:416.8px;top:600.5999999999999px;width:4.4px;height:4.4px;border-radius:50%;background:#444"></div>
<svg class="abs" style="left:252px;top:619px" width="108" height="133" viewBox="0 0 108 133"><defs><filter id="b252619" x="-10%" y="-10%" width="120%" height="120%"><feGaussianBlur stdDeviation="1.2"/></filter><clipPath id="cb252619"><rect width="108" height="133"/></clipPath></defs><g clip-path="url(#cb252619)"><g filter="url(#b252619)"><rect width="108" height="133" fill="#2e2016"/><rect x="0" y="55" width="17" height="78" fill="#4e321e"/><rect x="16" y="15" width="18" height="80" fill="#3c5232"/><rect x="16" y="78" width="18" height="16" fill="#6a7c52"/><rect x="33" y="18" width="10" height="95" fill="#84482a"/><rect x="43" y="25" width="11" height="50" fill="#4a663a"/><rect x="54" y="8" width="12" height="75" fill="#5e341c"/><rect x="66" y="0" width="12" height="76" fill="#dedcd8"/><rect x="78" y="0" width="30" height="133" fill="#261a12"/><rect x="79" y="0" width="6" height="110" fill="#5a321c"/><ellipse cx="32" cy="5" rx="40" ry="13" fill="#b4a678"/><rect x="0" y="14" width="17" height="46" fill="#e4d8c2"/><ellipse cx="55" cy="65" rx="8" ry="9" fill="#6e5038"/><ellipse cx="55" cy="53" rx="9" ry="5.5" fill="#f0f0ee"/><path d="M30 133 L30 98 C33 84 42 76 55 74 C70 76 78 84 80 98 L82 133z" fill="#e6e6e2"/><path d="M8 133 C12 120 25 112 45 112 C65 112 78 118 82 133z" fill="#e0e0dc"/><ellipse cx="45" cy="120" rx="10" ry="5" fill="#5a3e2c"/><path d="M74 133 L78 96 L86 112 L94 92 L100 110 L108 98 L108 133z" fill="#d2b45e"/><ellipse cx="98" cy="112" rx="8" ry="8" fill="#b83a3a"/><path d="M0 133 L4 118 L16 108 L12 133z" fill="#a88a50"/></g></g></svg>
<div class="abs" style="left:478px;top:574px;width:275px;height:178px;overflow:hidden">
<div class="abs" style="left:0;top:0;width:275px;height:330px;border:1px solid #e4e4e4;border-radius:4px;background:#fff"></div>
<div class="abs" style="left:1px;top:44px;width:273px;height:1px;background:#ebebeb"></div>
<div class="abs" style="left:1px;top:45px;width:273px;height:161px;background:#f4f4f4"></div>
<div class="abs" style="left:1px;top:206px;width:273px;height:1px;background:#ebebeb"></div>
</div>
<div class="abs" style="left:488px;top:583px;width:26px;height:26px;border:1.5px solid #8c8c8c;border-radius:4.5px;background:#fff"></div>
<svg class="abs" style="left:679px;top:582.5px;" width="26" height="26" viewBox="0 0 24 24"><path fill="#444" d="M18 15v3H6v-3H4v3c0 1.1.9 2 2 2h12c1.1 0 2-.9 2-2v-3h-2zm-1-4l-1.41-1.41L13 12.17V4h-2v8.17L8.41 9.59 7 11l5 5 5-5z"/></svg>
<div class="abs" style="left:726.8px;top:587.3px;width:4.4px;height:4.4px;border-radius:50%;background:#444"></div>
<div class="abs" style="left:726.8px;top:594.0px;width:4.4px;height:4.4px;border-radius:50%;background:#444"></div>
<div class="abs" style="left:726.8px;top:600.5999999999999px;width:4.4px;height:4.4px;border-radius:50%;background:#444"></div>
<svg class="abs" style="left:551px;top:619px" width="130" height="133" viewBox="0 0 130 133"><defs><filter id="b551619" x="-10%" y="-10%" width="120%" height="120%"><feGaussianBlur stdDeviation="1.2"/></filter><clipPath id="cb551619"><rect width="130" height="133"/></clipPath></defs><g clip-path="url(#cb551619)"><g filter="url(#b551619)"><defs><linearGradient id="sky5" x1="0" y1="0" x2="0" y2="1"><stop offset="0" stop-color="#c5d5de"/><stop offset="1" stop-color="#e2e6e6"/></linearGradient></defs><rect width="130" height="133" fill="#4a3a30"/><rect width="130" height="38" fill="url(#sky5)"/><path d="M0 40 C8 33 20 32 35 36 C45 30 60 28 75 34 L100 38 L130 36 L130 60 L0 75z" fill="#3c3430"/><path d="M95 42 L130 45 L130 75 C120 65 105 55 95 42z" fill="#b8764a"/><path d="M0 55 C20 50 40 55 60 48 C80 55 95 60 110 75 L130 95 L130 133 L0 133z" fill="#3e322c"/><path d="M60 55 C70 58 85 65 95 80 C105 95 120 110 130 115 L130 133 L95 133 C85 110 70 90 60 55z" fill="#5a463a"/><path d="M0 95 C10 100 25 105 40 100 L30 133 L0 133z" fill="#6a4a38"/><path d="M0 110 C20 108 40 105 60 112 L95 125 L110 133 L0 133z" fill="#b4623a"/><path d="M45 118 L68 92 L90 125 L60 130z" fill="#5a3a2a"/><path d="M25 125 C35 115 55 110 70 95 C80 108 90 120 95 128 L80 132 L40 132z" fill="none" stroke="#8aa0a8" stroke-width="1.6" stroke-dasharray="2 2"/></g></g></svg>
<div class="abs" style="left:789px;top:574px;width:275px;height:178px;overflow:hidden">
<div class="abs" style="left:0;top:0;width:275px;height:330px;border:1px solid #e4e4e4;border-radius:4px;background:#fff"></div>
<div class="abs" style="left:1px;top:44px;width:273px;height:1px;background:#ebebeb"></div>
<div class="abs" style="left:1px;top:45px;width:273px;height:161px;background:#f4f4f4"></div>
<div class="abs" style="left:1px;top:206px;width:273px;height:1px;background:#ebebeb"></div>
</div>
<div class="abs" style="left:799px;top:583px;width:26px;height:26px;border:1.5px solid #8c8c8c;border-radius:4.5px;background:#fff"></div>
<svg class="abs" style="left:990px;top:582.5px;" width="26" height="26" viewBox="0 0 24 24"><path fill="#444" d="M18 15v3H6v-3H4v3c0 1.1.9 2 2 2h12c1.1 0 2-.9 2-2v-3h-2zm-1-4l-1.41-1.41L13 12.17V4h-2v8.17L8.41 9.59 7 11l5 5 5-5z"/></svg>
<div class="abs" style="left:1037.8px;top:587.3px;width:4.4px;height:4.4px;border-radius:50%;background:#444"></div>
<div class="abs" style="left:1037.8px;top:594.0px;width:4.4px;height:4.4px;border-radius:50%;background:#444"></div>
<div class="abs" style="left:1037.8px;top:600.5999999999999px;width:4.4px;height:4.4px;border-radius:50%;background:#444"></div>
<svg class="abs" style="left:861px;top:619px" width="130" height="133" viewBox="0 0 130 133"><defs><filter id="b861619" x="-10%" y="-10%" width="120%" height="120%"><feGaussianBlur stdDeviation="1.2"/></filter><clipPath id="cb861619"><rect width="130" height="133"/></clipPath></defs><g clip-path="url(#cb861619)"><g filter="url(#b861619)"><rect width="130" height="133" fill="#4a3020"/><rect y="109" width="130" height="8" fill="#3e2c1e"/><rect x="0" y="110" width="40" height="4" fill="#8a4a2a"/><rect x="70" y="110" width="30" height="3" fill="#a85a2a"/><rect y="115" width="100" height="5" fill="#a03428"/><rect y="120" width="130" height="13" fill="#3a3226"/><rect x="100" y="118" width="30" height="15" fill="#4e3a2a"/><ellipse cx="12" cy="130" rx="14" ry="7" fill="#9a9a88"/><rect x="75" y="131" width="25" height="2" fill="#a03028"/></g></g></svg>
<div class="abs" style="left:1099px;top:574px;width:275px;height:178px;overflow:hidden">
<div class="abs" style="left:0;top:0;width:275px;height:330px;border:1px solid #e4e4e4;border-radius:4px;background:#fff"></div>
<div class="abs" style="left:1px;top:44px;width:273px;height:1px;background:#ebebeb"></div>
<div class="abs" style="left:1px;top:45px;width:273px;height:161px;background:#f4f4f4"></div>
<div class="abs" style="left:1px;top:206px;width:273px;height:1px;background:#ebebeb"></div>
</div>
<div class="abs" style="left:1109px;top:583px;width:26px;height:26px;border:1.5px solid #8c8c8c;border-radius:4.5px;background:#fff"></div>
<svg class="abs" style="left:1300px;top:582.5px;" width="26" height="26" viewBox="0 0 24 24"><path fill="#444" d="M18 15v3H6v-3H4v3c0 1.1.9 2 2 2h12c1.1 0 2-.9 2-2v-3h-2zm-1-4l-1.41-1.41L13 12.17V4h-2v8.17L8.41 9.59 7 11l5 5 5-5z"/></svg>
<div class="abs" style="left:1347.8px;top:587.3px;width:4.4px;height:4.4px;border-radius:50%;background:#444"></div>
<div class="abs" style="left:1347.8px;top:594.0px;width:4.4px;height:4.4px;border-radius:50%;background:#444"></div>
<div class="abs" style="left:1347.8px;top:600.5999999999999px;width:4.4px;height:4.4px;border-radius:50%;background:#444"></div>
<svg class="abs" style="left:1135px;top:619px" width="203" height="133" viewBox="0 0 203 133"><defs><filter id="b1135619" x="-10%" y="-10%" width="120%" height="120%"><feGaussianBlur stdDeviation="1.2"/></filter><clipPath id="cb1135619"><rect width="203" height="133"/></clipPath></defs><g clip-path="url(#cb1135619)"><g filter="url(#b1135619)"><defs><linearGradient id="sky6" x1="0" y1="0" x2="1" y2="1"><stop offset="0" stop-color="#e8c4bc"/><stop offset="0.6" stop-color="#e2c6cc"/><stop offset="1" stop-color="#b8b8cc"/></linearGradient><linearGradient id="sea6" x1="0" y1="0" x2="0" y2="1"><stop offset="0" stop-color="#c8d4d4"/><stop offset="1" stop-color="#a8c8c0"/></linearGradient></defs><rect width="203" height="133" fill="url(#sea6)"/><rect width="203" height="50" fill="url(#sky6)"/><path d="M0 48 L203 44 L203 56 L0 56z" fill="#dacccc"/><path d="M0 75 C30 70 60 80 95 85 L110 100 L120 133 L0 133z" fill="#c6dad6"/><path d="M20 90 C50 92 80 95 110 105 L125 133 L60 133z" fill="#7aaaa0"/><path d="M40 110 C70 112 100 118 130 125 L135 133 L50 133z" fill="#d8e6e2"/><path d="M85 47 L160 45 L160 72 L112 70 L85 62z" fill="#b89a78"/><path d="M83 55 C85 49 95 48 110 50 L112 88 L84 90z" fill="#a48050"/><path d="M110 68 L150 72 C160 90 175 110 190 125 L185 133 L140 133 C130 112 120 90 110 75z" fill="#c8a272"/><path d="M148 48 C170 44 190 42 203 42 L203 128 C190 118 175 105 160 92 L145 75z" fill="#cc924e"/><path d="M148 48 C170 44 190 42 203 42 L203 54 L148 57z" fill="#8a7a50"/><path d="M0 105 C20 105 40 115 60 133 L0 133z" fill="#5a5432"/><ellipse cx="15" cy="120" rx="10" ry="8" fill="#3e5a30"/><path d="M168 133 C178 118 192 108 203 103 L203 133z" fill="#e2caa0"/></g></g></svg>
<div class="abs" style="left:1272px;top:507px;width:1px;height:15.5px;background:#cfcfcf"></div>
<div class="t" style="left:1277.20px;top:507.84px;font-size:12px;line-height:12px;color:#111;font-weight:normal;">2.79 MB</div>
<div class="abs" style="left:755px;top:77px;width:299px;height:651px;background:#fff;border-radius:5px;box-shadow:0 2px 6px rgba(0,0,0,.22),0 0 1px rgba(0,0,0,.25)"></div>
<div class="abs" style="left:746px;top:318px;width:311px;height:49px;background:#e8e8e8;border:5px solid #f7ab00;box-shadow:inset 0 2px 2px rgba(0,0,0,.55),0 2px 2px rgba(0,0,0,.55)"></div>
<div class="t" style="left:801.50px;top:98.66px;font-size:15.4px;line-height:15.4px;color:#222;font-weight:normal;">Info</div>
<div class="t" style="left:801.50px;top:138.27px;font-size:15.4px;line-height:15.4px;color:#222;font-weight:normal;">Annotations</div>
<div class="t" style="left:801.50px;top:177.88px;font-size:15.4px;line-height:15.4px;color:#222;font-weight:normal;">Edit / New Version</div>
<div class="t" style="left:801.50px;top:217.49px;font-size:15.4px;line-height:15.4px;color:#222;font-weight:normal;">Comments</div>
<div class="t" style="left:801.50px;top:257.10px;font-size:15.4px;line-height:15.4px;color:#222;font-weight:normal;">Embed Metadata</div>
<div class="t" style="left:801.50px;top:296.71px;font-size:15.4px;line-height:15.4px;color:#222;font-weight:normal;">Check Out</div>
<div class="t" style="left:801.50px;top:336.32px;font-size:15.4px;line-height:15.4px;color:#222;font-weight:normal;">Move Resource</div>
<div class="t" style="left:801.50px;top:375.93px;font-size:15.4px;line-height:15.4px;color:#222;font-weight:normal;">Create Alias</div>
<div class="t" style="left:801.50px;top:415.54px;font-size:15.4px;line-height:15.4px;color:#222;font-weight:normal;">Usage</div>
<div class="t" style="left:801.50px;top:455.15px;font-size:15.4px;line-height:15.4px;color:#222;font-weight:normal;">Email Link</div>
<div class="t" style="left:801.50px;top:494.76px;font-size:15.4px;line-height:15.4px;color:#222;font-weight:normal;">Related</div>
<div class="t" style="left:801.50px;top:534.37px;font-size:15.4px;line-height:15.4px;color:#222;font-weight:normal;">Share / Embed Resource</div>
<div class="t" style="left:801.50px;top:573.98px;font-size:15.4px;line-height:15.4px;color:#222;font-weight:normal;">Request Feedback</div>
<div class="t" style="left:801.50px;top:613.59px;font-size:15.4px;line-height:15.4px;color:#222;font-weight:normal;">Workflow History</div>
<div class="t" style="left:801.50px;top:653.20px;font-size:15.4px;line-height:15.4px;color:#222;font-weight:normal;">Add/Remove from My Collection(s)</div>
<div class="t" style="left:801.50px;top:692.81px;font-size:15.4px;line-height:15.4px;color:#222;font-weight:normal;">Delete Resource</div>
<svg class="abs" style="left:0;top:0" width="1540" height="820" viewBox="0 0 1540 820"><circle cx="781.8" cy="106.8" r="9.85" fill="none" stroke="#444" stroke-width="2.0"/><circle cx="781.8" cy="101.9" r="1.15" fill="#444"/><path d="M781.8 104.3V111.8" fill="none" stroke="#444" stroke-width="1.9" stroke-linecap="butt" stroke-linejoin="miter" /><path d="M789.8 145.5V138.2Q789.8 136.6 788.2 136.6H773.4Q771.8 136.6 771.8 138.2V153Q771.8 154.6 773.4 154.6H782" fill="none" stroke="#444" stroke-width="2.0" stroke-linecap="butt" stroke-linejoin="miter" /><path d="M774.2 141.3L775.6 142.7L778.4 139.6" fill="none" stroke="#444" stroke-width="1.3" stroke-linecap="butt" stroke-linejoin="miter" /><path d="M774.3 144.9L777.9 148.5M777.9 144.9L774.3 148.5" fill="none" stroke="#444" stroke-width="1.3" stroke-linecap="butt" stroke-linejoin="miter" /><path d="M780.8 140.6H786.2M780.8 143.6H786.2M780.8 146.6H783.5" fill="none" stroke="#444" stroke-width="1.5" stroke-linecap="butt" stroke-linejoin="miter" /><path d="M783.2 155.3L783.2 153.2L790 146.4L792.1 148.5L785.3 155.3z" fill="#444" /><path d="M772.5 192.2V195.2H775.5L787.2 183.5L784.2 180.5z" fill="none" stroke="#444" stroke-width="1.7" stroke-linecap="butt" stroke-linejoin="miter" /><path d="M786 178.7L789 181.7L791.3 179.4Q792.2 178.5 791.3 177.6L789.4 175.7Q788.5 174.8 787.6 175.7z" fill="#444" /><path d="M773 216H790.6Q791.6 216 791.6 217V235L787.8 231.2H773Q772 231.2 772 230.2V217Q772 216 773 216z" fill="none" stroke="#444" stroke-width="1.9" stroke-linecap="butt" stroke-linejoin="miter" /><path d="M775.5 220.1H788.1M775.5 223.5H788.1M775.5 226.9H788.1" fill="none" stroke="#444" stroke-width="1.6" stroke-linecap="butt" stroke-linejoin="miter" /><path d="M779.6 256.9H776.4Q774 256.9 774 259.3V262.6Q774 265 771.4 265.2Q774 265.4 774 267.8V271.1Q774 273.5 776.4 273.5H779.6" fill="none" stroke="#444" stroke-width="2.1" stroke-linecap="butt" stroke-linejoin="miter" /><path d="M784.4 256.9H787.6Q790 256.9 790 259.3V262.6Q790 265 792.6 265.2Q790 265.4 790 267.8V271.1Q790 273.5 787.6 273.5H784.4" fill="none" stroke="#444" stroke-width="2.1" stroke-linecap="butt" stroke-linejoin="miter" /><path d="M774.7 301.2H789.3V313.6Q789.3 315 787.9 315H776.1Q774.7 315 774.7 313.6z" fill="none" stroke="#444" stroke-width="1.9" stroke-linecap="butt" stroke-linejoin="miter" /><path d="M777.4 301.2V297.3Q777.4 292.9 782 292.9Q786.6 292.9 786.6 297.3V301.2" fill="none" stroke="#444" stroke-width="1.8" stroke-linecap="butt" stroke-linejoin="miter" /><circle cx="782" cy="308" r="1.6" fill="#444"/><path d="M771 343.7H791.2M785 337.2L791.5 343.7L785 350.2" fill="none" stroke="#444" stroke-width="1.7" stroke-linecap="butt" stroke-linejoin="miter" /><path d="M772.3 379.1H791.5M788 375.4L791.7 379.1L788 382.8" fill="none" stroke="#444" stroke-width="1.8" stroke-linecap="butt" stroke-linejoin="miter" /><path d="M791.8 388.1H772.5M776 384.4L772.3 388.1L776 391.8" fill="none" stroke="#444" stroke-width="1.8" stroke-linecap="butt" stroke-linejoin="miter" /><path d="M773.2 415H790.1V432H773.2z" fill="none" stroke="#444" stroke-width="1.8" stroke-linecap="butt" stroke-linejoin="miter" /><path d="M777.4 429.5V422.2M782 429.5V418.5M786.2 429.5V425.2" fill="none" stroke="#444" stroke-width="1.8" stroke-linecap="butt" stroke-linejoin="miter" /><path d="M773.3 469.5H775.5M773.3 469.5V455.4H792.3V463.4" fill="none" stroke="#444" stroke-width="1.8" stroke-linecap="butt" stroke-linejoin="miter" /><path d="M773.8 456L782.8 462.4L791.8 456" fill="none" stroke="#444" stroke-width="1.8" stroke-linecap="butt" stroke-linejoin="miter" /><path d="M783.8 465.8H782.2A3.2 3.2 0 0 0 782.2 472.2H783.8M788.2 465.8H789.8A3.2 3.2 0 0 1 789.8 472.2H788.2M783.5 469H788.5" fill="none" stroke="#444" stroke-width="1.8" stroke-linecap="butt" stroke-linejoin="miter" /><path d="M774.6 500.6V496.2H790" fill="none" stroke="#444" stroke-width="1.8" stroke-linecap="butt" stroke-linejoin="miter" /><path d="M788 492.4L792 496.2L788 500z" fill="#444" /><path d="M788.6 504V508.8H773.5" fill="none" stroke="#444" stroke-width="1.8" stroke-linecap="butt" stroke-linejoin="miter" /><path d="M775.6 505L771.6 508.8L775.6 512.6z" fill="#444" /><circle cx="788.2" cy="534.2" r="2.4" fill="none" stroke="#444" stroke-width="1.7"/><circle cx="775.2" cy="541.8" r="2.4" fill="none" stroke="#444" stroke-width="1.7"/><circle cx="788.2" cy="549.3" r="2.4" fill="none" stroke="#444" stroke-width="1.7"/><path d="M777.3 540.6L786.1 535.4M777.3 543L786.1 548.1" fill="none" stroke="#444" stroke-width="1.6" stroke-linecap="butt" stroke-linejoin="miter" /><path d="M790 578.5V573.5H772.2V590.5L775.2 587.6H779.2" fill="none" stroke="#444" stroke-width="1.8" stroke-linecap="butt" stroke-linejoin="miter" /><rect x="775.5" y="578.7" width="1.6" height="1.6" fill="#444"/><rect x="779.2" y="578.7" width="1.6" height="1.6" fill="#444"/><circle cx="787.2" cy="586.3" r="5.3" fill="#444"/><circle cx="787.2" cy="584.6" r="1.6" fill="#fff"/><ellipse cx="787.2" cy="589.3" rx="2.8" ry="1.4" fill="#fff"/><path d="M776.5 627.3A8.8 8.8 0 1 0 774.1 621.5" fill="none" stroke="#444" stroke-width="1.9" stroke-linecap="butt" stroke-linejoin="miter" /><path d="M770.1 621.5L773.95 625.9L777.8 621.5z" fill="#444" /><path d="M782.6 616.8V621.6L786.5 624.3" fill="none" stroke="#444" stroke-width="1.7" stroke-linecap="butt" stroke-linejoin="miter" /><path d="M775.8 654.8L786.3 650.8L792.2 665.5L781.8 669.7z" fill="none" stroke="#444" stroke-width="1.8" stroke-linecap="butt" stroke-linejoin="miter" /><circle cx="780.5" cy="657.2" r="1.1" fill="#444"/><path d="M772.4 660.8L770.2 668.4L772.4 669.2z" fill="#444" /><path d="M775.2 663.5L775.8 670.8L778.8 671.7z" fill="#444" /><path d="M774 693H789.8" fill="none" stroke="#444" stroke-width="1.6" stroke-linecap="butt" stroke-linejoin="miter" /><path d="M778.6 692.2V690.9H785.2V692.2" fill="none" stroke="#444" stroke-width="1.4" stroke-linecap="butt" stroke-linejoin="miter" /><path d="M775.5 695.3H788.1V709.8H775.5z" fill="none" stroke="#444" stroke-width="1.8" stroke-linecap="butt" stroke-linejoin="miter" /></svg>
<div class="abs" style="left:0;top:752px;width:1540px;height:68px;background:#fff"></div>
<div class="abs" style="left:0;top:137px;width:1px;height:683px;background:#a8a8a8"></div>
<div class="abs" style="left:9px;top:757.5px;width:1517px;height:2px;background:#e6e6e6"></div>
<div class="abs" style="left:9.4px;top:751.6px;width:14px;height:13.6px;border-radius:50%;background:#fbaa3b"></div>
<div class="abs" style="left:21px;top:780.8px;width:22px;height:22px;border-radius:50%;border:1px solid #777;background:#fff"></div>
<div class="t" style="left:49.00px;top:784.18px;font-size:15.15px;line-height:15.15px;color:#444;font-weight:normal;">Select All</div>
<div class="abs" style="left:122px;top:779px;width:1px;height:26px;background:#d8d8d8"></div>
<div class="t" style="left:146.80px;top:784.18px;font-size:15.15px;line-height:15.15px;color:#222;font-weight:normal;">1 - 8 of 29</div>
<div class="abs" style="left:-2px;top:227.3px;width:4px;height:4px;border-radius:50%;background:#222"></div>
<div class="abs" style="left:-2px;top:235px;width:4px;height:4px;border-radius:50%;background:#222"></div>
<div class="abs" style="left:-2px;top:242.7px;width:4px;height:4px;border-radius:50%;background:#222"></div>
<div class="abs" style="left:0;top:813px;width:1px;height:7px;background:#0a0050"></div>
</body></html>
